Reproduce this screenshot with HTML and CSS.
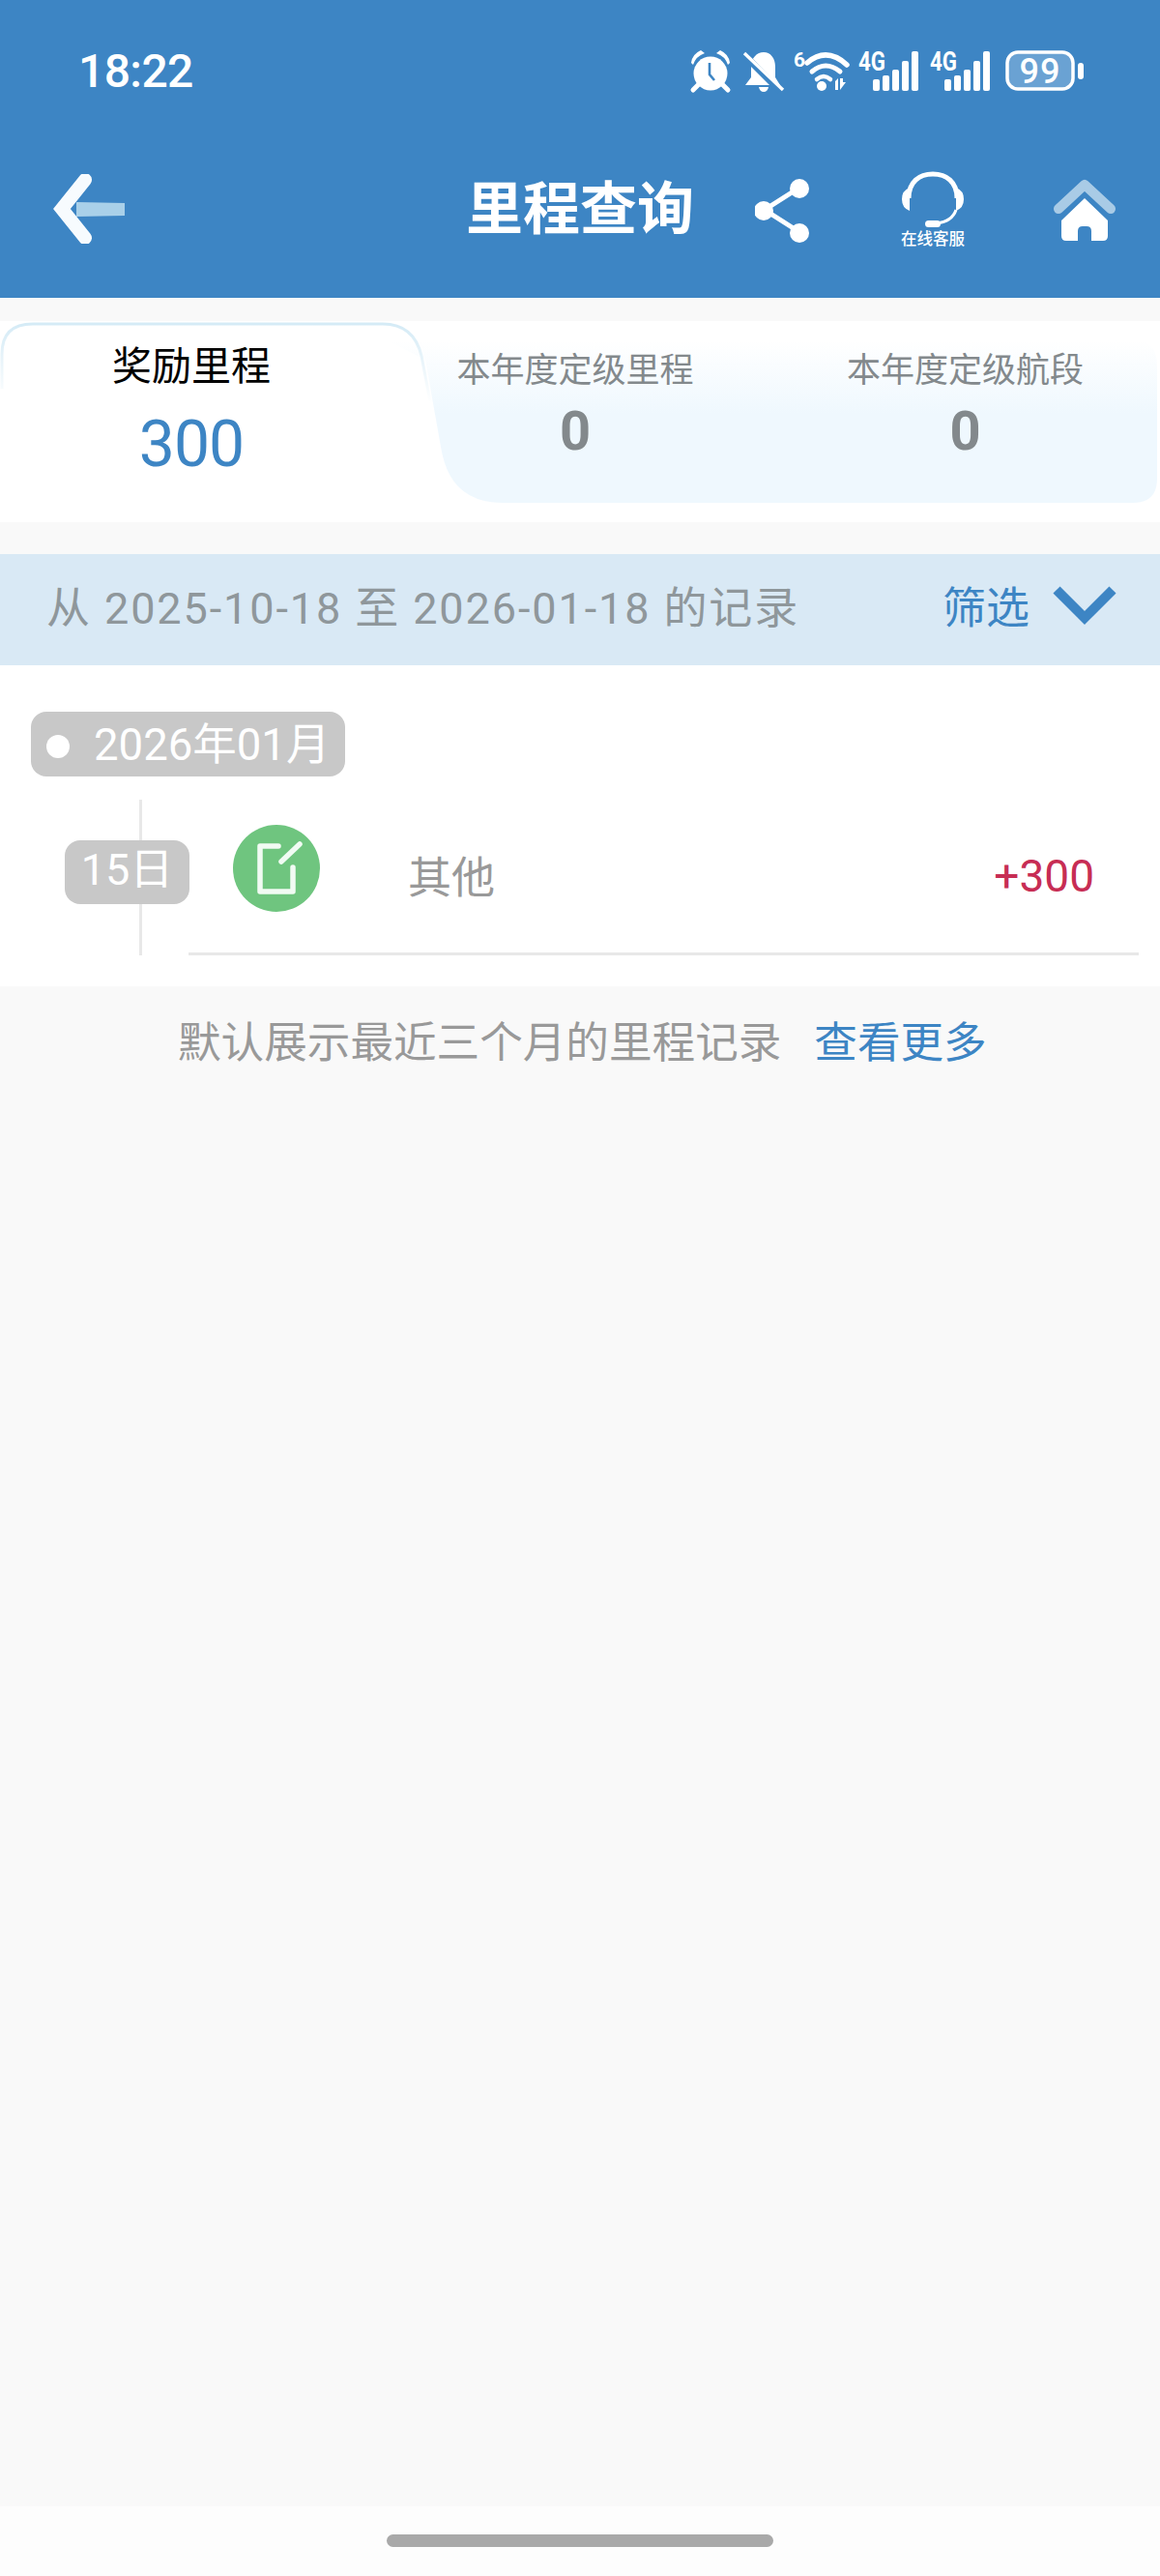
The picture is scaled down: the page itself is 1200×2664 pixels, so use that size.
FILE: index.html
```html
<!DOCTYPE html>
<html lang="zh-CN">
<head>
<meta charset="utf-8">
<title>里程查询</title>
<link rel="stylesheet" href="styles.css">
</head>
<body>
<div class="screen">
  <header class="header">
    <div class="status">
      <span class="clock">18:22</span>
      <div class="status-icons">
        <svg class="i-alarm" viewBox="0 0 42 44" width="42" height="44">
          <circle cx="21" cy="24" r="17.5" fill="#fff"/>
          <path d="M1 13 Q2 4 11 0 L15 3 Q6 6 3 15Z M41 13 Q40 4 31 0 L27 3 Q36 6 39 15Z" fill="#fff"/>
          <path d="M8 36 L3 41 M34 36 L39 41" stroke="#fff" stroke-width="5" stroke-linecap="round"/>
          <path d="M20 13 V25 L25 31" fill="none" stroke="#3d85c4" stroke-width="2.6"/>
        </svg>
        <svg class="i-bell" viewBox="0 0 42 44" width="42" height="44">
          <path d="M21 2 C28 2 33 8 33 17 V28 L38 36 H2 L8 28 V17 C8 8 14 2 21 2Z" fill="#fff"/>
          <path d="M16 38 H26 Q25 43 21 43 Q17 43 16 38Z" fill="#fff"/>
          <path d="M0 4 L38 42" stroke="#3d85c4" stroke-width="7"/>
          <path d="M1 3 L41 41" stroke="#fff" stroke-width="3.4"/>
        </svg>
        <svg class="i-wifi" viewBox="0 0 58 42" width="58" height="42">
          <text x="0" y="17" class="t-six">6</text>
          <path d="M14 13 Q34 -4 55 15" fill="none" stroke="#fff" stroke-width="5.5" stroke-linecap="round"/>
          <path d="M19 22 Q33 10 48 22" fill="none" stroke="#fff" stroke-width="5" stroke-linecap="round"/>
          <path d="M24 30 Q31 24 38 30" fill="none" stroke="#fff" stroke-width="4.5" stroke-linecap="round"/>
          <circle cx="29" cy="37" r="5" fill="#fff"/>
          <path d="M43 32 V41 H46 V29Z M48 29 V41 L54 33 H51 V29Z" fill="#fff"/>
        </svg>
        <svg class="i-signal" viewBox="0 0 62 42" width="62" height="42">
          <text x="0" y="21" class="t-4g" textLength="28" lengthAdjust="spacingAndGlyphs">4G</text>
          <rect x="15" y="30" width="7" height="12" rx="2" fill="#fff"/>
          <rect x="25" y="26" width="7" height="16" rx="2" fill="#fff"/>
          <rect x="35" y="20" width="7" height="22" rx="2" fill="#fff"/>
          <rect x="45" y="11" width="7" height="31" rx="2" fill="#fff"/>
          <rect x="55" y="1" width="7" height="41" rx="2" fill="#fff"/>
        </svg>
        <svg class="i-signal" viewBox="0 0 62 42" width="62" height="42">
          <text x="0" y="21" class="t-4g" textLength="28" lengthAdjust="spacingAndGlyphs">4G</text>
          <rect x="15" y="30" width="7" height="12" rx="2" fill="#fff"/>
          <rect x="25" y="26" width="7" height="16" rx="2" fill="#fff"/>
          <rect x="35" y="20" width="7" height="22" rx="2" fill="#fff"/>
          <rect x="45" y="11" width="7" height="31" rx="2" fill="#fff"/>
          <rect x="55" y="1" width="7" height="41" rx="2" fill="#fff"/>
        </svg>
        <svg class="i-battery" viewBox="0 0 82 42" width="82" height="42">
          <rect x="2" y="2" width="68" height="38" rx="11" fill="#6aa2d3" stroke="#fff" stroke-width="3.5"/>
          <text x="36" y="34" class="t-batt">99</text>
          <rect x="75" y="13" width="6" height="17" rx="3" fill="#fff"/>
        </svg>
      </div>
    </div>
    <div class="nav">
      <div class="nav-left">
        <svg viewBox="0 0 76 72" width="76" height="72">
          <path d="M24 29 L74 30 V43 L24 44Z" fill="#a9d0e9"/>
          <path d="M33 6 L9 36 L33 66" fill="none" stroke="#f7fbfe" stroke-width="14" stroke-linecap="round" stroke-linejoin="miter"/>
        </svg>
      </div>
      <h1 class="title">里程查询</h1>
      <div class="nav-right">
        <svg class="i-share" viewBox="0 0 60 68" width="60" height="68">
          <path d="M46 10 L10 33 L46 56" fill="none" stroke="#fff" stroke-width="5"/>
          <circle cx="46" cy="11" r="10" fill="#fff"/>
          <circle cx="9" cy="34" r="10" fill="#fff"/>
          <circle cx="46" cy="57" r="10" fill="#fff"/>
        </svg>
        <div class="service">
          <svg viewBox="0 0 68 60" width="68" height="60">
            <path d="M9 28 C9 11 20 3 34 3 C48 3 59 11 59 28" fill="none" stroke="#fff" stroke-width="5"/>
            <path d="M10 17 Q2 20 2 29 Q2 38 10 41Z M58 17 Q66 20 66 29 Q66 38 58 41Z" fill="#fff"/>
            <path d="M58 40 Q54 52 38 54" fill="none" stroke="#fff" stroke-width="3"/>
            <rect x="26" y="51" width="16" height="7" rx="3.5" fill="#fff"/>
          </svg>
          <span class="service-label">在线客服</span>
        </div>
        <svg class="i-home" viewBox="0 0 68 68" width="68" height="68">
          <path d="M7 32 L34 7 L61 32" fill="none" stroke="#a9cbe6" stroke-width="10" stroke-linecap="round" stroke-linejoin="round"/>
          <path fill-rule="evenodd" d="M34 21 L58 44 V60 Q58 65 53 65 H15 Q10 65 10 60 V44Z M27 65 H41 V55 Q41 50 36 50 H32 Q27 50 27 55Z" fill="#fff"/>
        </svg>
      </div>
    </div>
  </header>

  <section class="tabs">
    <svg class="tabs-bg" viewBox="0 0 1200 208" preserveAspectRatio="none">
      <defs>
        <linearGradient id="panel" x1="0" y1="0" x2="0" y2="1">
          <stop offset="0" stop-color="#ffffff"/>
          <stop offset="0.45" stop-color="#eff8fe"/>
          <stop offset="1" stop-color="#eff8fe"/>
        </linearGradient>
        <linearGradient id="edge" x1="0" y1="0" x2="0" y2="1">
          <stop offset="0" stop-color="#d5ebf6"/>
          <stop offset="0.25" stop-color="#e4f2f9"/>
          <stop offset="0.7" stop-color="#ffffff"/>
        </linearGradient>
      </defs>
      <path d="M400 20 H1172 Q1197 20 1197 45 V163 Q1197 188 1172 188 H520 Q465 188 456 130 L440 40 Z" fill="url(#panel)"/>
      <path d="M2 70 V34 Q2 3 34 3 H396 Q428 3 436 36 L452 120" fill="none" stroke="url(#edge)" stroke-width="3"/>
    </svg>
    <div class="tab tab-active">
      <div class="tab-label">奖励里程</div>
      <div class="tab-value">300</div>
    </div>
    <div class="tab">
      <div class="tab-label">本年度定级里程</div>
      <div class="tab-value">0</div>
    </div>
    <div class="tab tab-last">
      <div class="tab-label">本年度定级航段</div>
      <div class="tab-value">0</div>
    </div>
  </section>

  <section class="filter">
    <span class="filter-range">从 2025-10-18 至 2026-01-18 的记录</span>
    <span class="filter-action">
      <span class="filter-link">筛选</span>
      <svg viewBox="0 0 68 44" width="68" height="44">
        <path d="M5 6 L34 35 L63 6" fill="none" stroke="#3d85c4" stroke-width="10"/>
      </svg>
    </span>
  </section>

  <section class="records">
    <div class="month"><i class="month-dot"></i><span class="month-text">2026年01月</span></div>
    <div class="record">
      <div class="day">15日</div>
      <div class="badge">
        <svg viewBox="0 0 90 90" width="90" height="90">
          <path d="M47 22 H28 V69 H62 V44" fill="none" stroke="#f1fbf3" stroke-width="5.5" stroke-linejoin="round" stroke-linecap="round"/>
          <path d="M50 38 L69 20" fill="none" stroke="#f1fbf3" stroke-width="5.5" stroke-linecap="round"/>
        </svg>
      </div>
      <div class="record-name">其他</div>
      <div class="record-points">+300</div>
    </div>
  </section>

  <p class="more">
    <span>默认展示最近三个月的里程记录</span>
    <a class="more-link">查看更多</a>
  </p>

  <footer class="home-bar"><i class="pill"></i></footer>
</div>
</body>
</html>
```

FILE: styles.css
```css
* { box-sizing: border-box; }
html, body { margin: 0; padding: 0; }
body { font-family: Roboto, "Noto Sans CJK SC", sans-serif; background: #f9f9f9; }
.screen { width: 1200px; height: 2664px; display: flex; flex-direction: column; background: #f9f9f9; overflow: hidden; }

.header { height: 308px; background: #3d85c4; color: #fff; flex: none; display: flex; flex-direction: column; }
.status { height: 146px; display: flex; align-items: flex-start; justify-content: space-between; padding: 46px 78px 0 81px; }
.clock { font-size: 48px; line-height: 56px; font-weight: 500; letter-spacing: -0.6px; }
.status-icons { display: flex; align-items: flex-start; padding-top: 6px; }
.status-icons svg { display: block; flex: none; overflow: visible; }
.i-bell { margin-left: 13px; }
.i-wifi { margin-left: 10px; }
.i-signal { margin-left: 9px; }
.i-signal + .i-signal { margin-left: 12px; }
.i-battery { margin-left: 16px; }
.t-six { font: 700 21px Roboto, sans-serif; fill: #fff; }
.t-4g { font: 700 27px Roboto, sans-serif; fill: #fff; }
.t-batt { font: 500 36px Roboto, sans-serif; fill: #fff; text-anchor: middle; letter-spacing: 1px; }

.nav { height: 162px; display: grid; grid-template-columns: 1fr auto 1fr; align-items: center; padding: 0 44px; }
.nav-left svg { display: block; margin: -22px 0 0 11px; }
.title { margin: -20px 0 0; font-size: 59px; font-weight: 700; line-height: 80px; color: #fff; }
.nav-right { display: flex; align-items: flex-start; justify-content: flex-end; margin-top: -20px; }
.i-share { display: block; margin-top: 7px; }
.service { display: flex; flex-direction: column; align-items: center; width: 70px; margin-left: 89px; }
.service svg { display: block; }
.service-label { font-size: 16.5px; line-height: 20px; font-weight: 500; white-space: nowrap; margin-top: 1px; }
.i-home { display: block; margin-left: 88px; margin-top: 7px; }

.tabs { position: relative; margin-top: 24px; height: 208px; background: #fff; display: grid; grid-template-columns: 396px 398px 406px; flex: none; }
.tabs-bg { position: absolute; inset: 0; width: 100%; height: 100%; }
.tab { position: relative; text-align: center; color: #83898c; padding-top: 30px; }
.tab-last { padding-left: 3px; }
.tab-label { font-size: 35px; line-height: 44px; }
.tab-value { font-size: 56px; line-height: 64px; font-weight: 700; margin-top: 8px; }
.tab-active { color: #000; padding-top: 21px; }
.tab-active .tab-label { font-size: 41px; line-height: 52px; }
.tab-active .tab-value { font-size: 66px; line-height: 76px; font-weight: 400; color: #3d85c4; margin-top: 17px; letter-spacing: -1px; }

.filter { margin-top: 33px; height: 115px; flex: none; background: #d9e9f5; display: flex; align-items: center; justify-content: space-between; padding: 0 44px 10px 48px; }
.filter-range { font-size: 45px; color: #8f979b; letter-spacing: 1.9px; white-space: nowrap; }
.filter-action { display: flex; align-items: center; gap: 23px; }
.filter-link { font-size: 45px; color: #3d85c4; }
.filter-action svg { display: block; }

.records { height: 332px; background: #fff; flex: none; padding: 48px 22px 0 32px; }
.month { display: inline-flex; align-items: center; height: 67px; width: 325px; padding-left: 16px; gap: 25px; background: #c8c8c8; border-radius: 16px; color: #fff; font-size: 45.5px; }
.month-dot { width: 24px; height: 24px; border-radius: 50%; background: #fff; flex: none; margin-top: 5px; }
.month-text { margin-top: -8px; }
.record { position: relative; display: flex; align-items: center; height: 161px; margin-top: 24px; }
.record::before { content: ""; position: absolute; left: 112px; top: 0; bottom: 0; width: 3px; background: #e8e8e8; }
.record::after { content: ""; position: absolute; left: 163px; right: 0; bottom: 0; height: 3px; background: #e8e8e8; }
.day { position: relative; margin-left: 35px; width: 129px; height: 66px; line-height: 62px; background: #c8c8c8; border-radius: 16px; color: #fff; font-size: 45px; text-align: center; margin-top: -11px; }
.badge { width: 90px; height: 90px; border-radius: 50%; background: #6fc57f; margin-left: 45px; margin-top: -19px; flex: none; }
.badge svg { display: block; }
.record-name { margin-left: 91px; font-size: 45px; color: #999; margin-top: -7px; }
.record-points { margin-left: auto; margin-right: 46px; font-size: 46px; color: #c72d54; margin-top: -4px; }

.more { margin: 30px 0 0 184px; font-size: 44.6px; line-height: 58px; color: #999; display: flex; gap: 34px; }
.more-link { color: #3d85c4; }

.home-bar { margin-top: auto; height: 72px; background: #fdfdfd; flex: none; display: flex; justify-content: center; padding-top: 29px; }
.pill { width: 400px; height: 13px; border-radius: 7px; background: #a9a9a9; }
```
